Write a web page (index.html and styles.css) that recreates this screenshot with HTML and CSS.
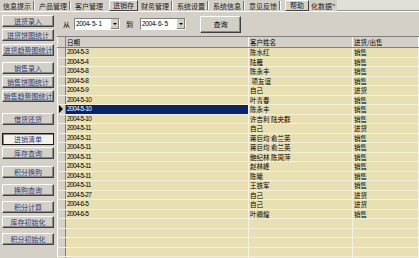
FILE: index.html
```html
<!DOCTYPE html>
<html>
  <head>
    <title>进销存</title>
    <link rel="stylesheet" href="styles.css">
  </head>
  <body>
    <div id="app">
      <div id="tabs">
        <span class="tab">信息提示</span><span class="sep"></span>
        <span class="tab">产品管理</span><span class="sep"></span>
        <span class="tab">客户管理</span>
        <span class="tab tab-on">进销存</span>
        <span class="tab">财务管理</span><span class="sep"></span>
        <span class="tab">系统设置</span><span class="sep"></span>
        <span class="tab">系统信息</span><span class="sep"></span>
        <span class="tab">意见反馈</span><span class="sep"></span>
        <span class="tab tab-on help">帮助</span>
        <span class="tab tail">化数据"</span>
        <span class="tab-fill"></span>
      </div>

      <div id="main">
        <div id="side">
          <div class="btn sp3">进货录入</div>
          <div class="btn">进货饼图统计</div>
          <div class="btn sp3">进货趋势图统计</div>
          <div class="btn sp6">销售录入</div>
          <div class="btn">销售饼图统计</div>
          <div class="btn">销售趋势图统计</div>
          <div class="btn sp11">借货还货</div>
          <div class="btn on sp8">进销清单</div>
          <div class="btn">库存查询</div>
          <div class="btn sp7">积分换购</div>
          <div class="btn sp6">换购查询</div>
          <div class="btn sp5">积分计算</div>
          <div class="btn sp3">库存初始化</div>
          <div class="btn sp5">积分初始化</div>
        </div>

        <div id="content">
          <div id="toolbar">
            <span class="lbl">从</span>
            <div class="combo"><span class="combo-text">2004- 5- 1</span><span class="drop"></span></div>
            <span class="lbl lbl-to">到</span>
            <div class="combo"><span class="combo-text">2004- 6- 5</span><span class="drop"></span></div>
            <div id="query">查询</div>
          </div>

          <div id="grid">
            <div class="row head">
              <span class="ind"></span>
              <span class="cell c1">日期</span>
              <span class="cell c2">客户姓名</span>
              <span class="cell c3">进货/出售</span>
            </div>
            <div id="rows"></div>
          </div>
        </div>
      </div>
    </div>

    <script>
      const records = [
        ["2004-5-3", "陈水红", "销售"],
        ["2004-5-4", "陆雁", "销售"],
        ["2004-5-8", "陈永丰", "销售"],
        ["2004-5-8", " 项友谊", "销售"],
        ["2004-5-9", "自己", "进货"],
        ["2004-5-10", "叶青春", "销售"],
        ["2004-5-10", "陈永丰", "销售"],
        ["2004-5-10", "许吉利 陆央群", "销售"],
        ["2004-5-11", "自己", "进货"],
        ["2004-5-11", "蒋巨均 俞兰英", "销售"],
        ["2004-5-11", "蒋巨均 俞兰英", "销售"],
        ["2004-5-11", "鲍纪林 陈周萍", "销售"],
        ["2004-5-11", "赵林峰", "销售"],
        ["2004-5-11", "陈曦", "销售"],
        ["2004-5-11", "王铁军", "销售"],
        ["2004-5-27", "自己", "进货"],
        ["2004-6-5", "自己", "进货"],
        ["2004-6-5", "叶卿煌", "销售"],
        ["", "", ""],
        ["", "", ""],
        ["", "", ""],
        ["", "", ""],
        ["", "", ""]
      ];
      const selected = 6;
      const rowsBox = document.getElementById("rows");

      records.forEach((rec, i) => {
        const row = document.createElement("div");
        row.className = "row";

        const ind = document.createElement("span");
        ind.className = "ind";
        if (i === selected) ind.classList.add("current");
        row.appendChild(ind);

        rec.forEach((val, j) => {
          const cell = document.createElement("span");
          cell.className = "cell c" + (j + 1);
          if (j === 0) cell.classList.add("date");
          if (i === selected && j === 0) cell.classList.add("sel");
          cell.textContent = val;
          row.appendChild(cell);
        });

        rowsBox.appendChild(row);
      });
    </script>
  </body>
</html>
```

FILE: styles.css
```css
body {
  margin: 0;
  padding: 0;
  background-color: #d4d0c8;
  font-family: "Noto Sans CJK SC", "Liberation Sans", sans-serif;
  color: #000;
}

#app {
  width: 419px;
  height: 258px;
  overflow: hidden;
}

/* top tab strip */
#tabs {
  display: flex;
  align-items: center;
  height: 12px;
  padding-left: 1px;
  font-size: 7px;
  line-height: 10px;
  border-bottom: 1px solid #ffffff;
  box-sizing: border-box;
  color: #202020;
}

#tabs .tab {
  padding: 0 2px;
  white-space: nowrap;
}

#tabs .sep {
  width: 1px;
  height: 9px;
  margin: 0 2px 0 0;
  background-color: #707070;
  border-right: 1px solid #ffffff;
}

#tabs .tab-on {
  margin: 0 1px 0 4px;
  padding: 0 3px;
  border: 1px solid;
  border-color: #ffffff #404040 #404040 #ffffff;
  line-height: 9px;
}

#tabs .help {
  padding: 0 4px;
  margin-left: 2px;
}

#tabs .tail {
  padding-left: 1px;
}

#tabs .tab-fill {
  flex: 1;
  height: 10px;
  background-color: #e2dfd8;
  border-bottom: 1px solid #9a978f;
}

#main {
  display: flex;
  height: 246px;
}

/* left command buttons */
#side {
  display: flex;
  flex-direction: column;
  width: 57px;
  padding-left: 2px;
  box-sizing: border-box;
}

.btn {
  width: 52px;
  height: 12px;
  margin-top: 2px;
  box-sizing: border-box;
  border: 1px solid;
  border-color: #ffffff #404040 #404040 #ffffff;
  box-shadow: inset -1px -1px 0 #888888;
  font-size: 7px;
  line-height: 10px;
  text-align: center;
  color: #2a3c78;
  white-space: nowrap;
  overflow: hidden;
}

.btn.on {
  background-color: #f2f1ec;
  border-color: #1a1a1a;
  box-shadow: inset 1px 1px 0 #888888;
}

.sp3 { margin-top: 3px; }
.sp5 { margin-top: 5px; }
.sp6 { margin-top: 6px; }
.sp7 { margin-top: 7px; }
.sp8 { margin-top: 8px; }
.sp11 { margin-top: 11px; }

#content {
  flex: 1;
  display: flex;
  flex-direction: column;
  min-width: 0;
}

/* date filter bar */
#toolbar {
  display: flex;
  align-items: center;
  height: 24px;
  padding-left: 6px;
  font-size: 7px;
  flex-shrink: 0;
}

#toolbar .lbl {
  margin-right: 4px;
}

#toolbar .lbl-to {
  margin-left: 6px;
  margin-right: 7px;
}

.combo {
  display: flex;
  width: 46px;
  height: 12px;
  box-sizing: border-box;
  background-color: #ffffff;
  border: 1px solid;
  border-color: #808080 #ffffff #ffffff #808080;
}

.combo-text {
  flex: 1;
  padding-left: 1px;
  font-family: "Liberation Sans", sans-serif;
  font-size: 6.5px;
  line-height: 10px;
  letter-spacing: -0.4px;
  white-space: pre;
}

.drop {
  width: 8px;
  background-color: #d4d0c8;
  border-left: 1px solid #ffffff;
  box-shadow: inset -1px -1px 0 #808080;
  display: flex;
  align-items: center;
  justify-content: center;
}

.drop::after {
  content: "";
  border-left: 2px solid transparent;
  border-right: 2px solid transparent;
  border-top: 2px solid #000;
}

#query {
  width: 41px;
  height: 17px;
  margin-left: 14px;
  box-sizing: border-box;
  border: 1px solid;
  border-color: #ffffff #404040 #404040 #ffffff;
  box-shadow: inset -1px -1px 0 #888888;
  font-size: 7px;
  line-height: 15px;
  text-align: center;
}

/* data grid */
#grid {
  flex: 1;
  overflow: hidden;
  border-top: 1px solid #808080;
}

.row {
  display: flex;
  height: 9.5px;
  background-color: #e8dfb2;
  border-bottom: 1px solid #f4efd8;
  box-sizing: border-box;
}

.row.head {
  height: 11px;
  background-color: #d4d0c8;
  border-bottom: 1px solid #808080;
}

.ind {
  width: 8px;
  flex-shrink: 0;
  background-color: #d4d0c8;
  border-right: 1px solid #808080;
  box-shadow: inset 1px 0 0 #ffffff;
  position: relative;
}

.ind.current::after {
  content: "";
  position: absolute;
  left: 2px;
  top: 0;
  border-top: 4px solid transparent;
  border-bottom: 4px solid transparent;
  border-left: 4px solid #000;
}

.cell {
  padding-left: 1px;
  font-size: 6.5px;
  line-height: 8.5px;
  white-space: pre;
  overflow: hidden;
  box-sizing: border-box;
  border-right: 1px solid #f6f3e4;
}

.head .cell {
  font-size: 6.5px;
  line-height: 10px;
  border-right: 1px solid #ffffff;
}

.c1 {
  width: 183px;
}

.c2 {
  width: 104px;
}

.c3 {
  flex: 1;
}

.cell.date {
  font-family: "Liberation Sans", sans-serif;
  letter-spacing: -0.6px;
}

.cell.sel {
  background-color: #0a246a;
  color: #ffffff;
}
```
